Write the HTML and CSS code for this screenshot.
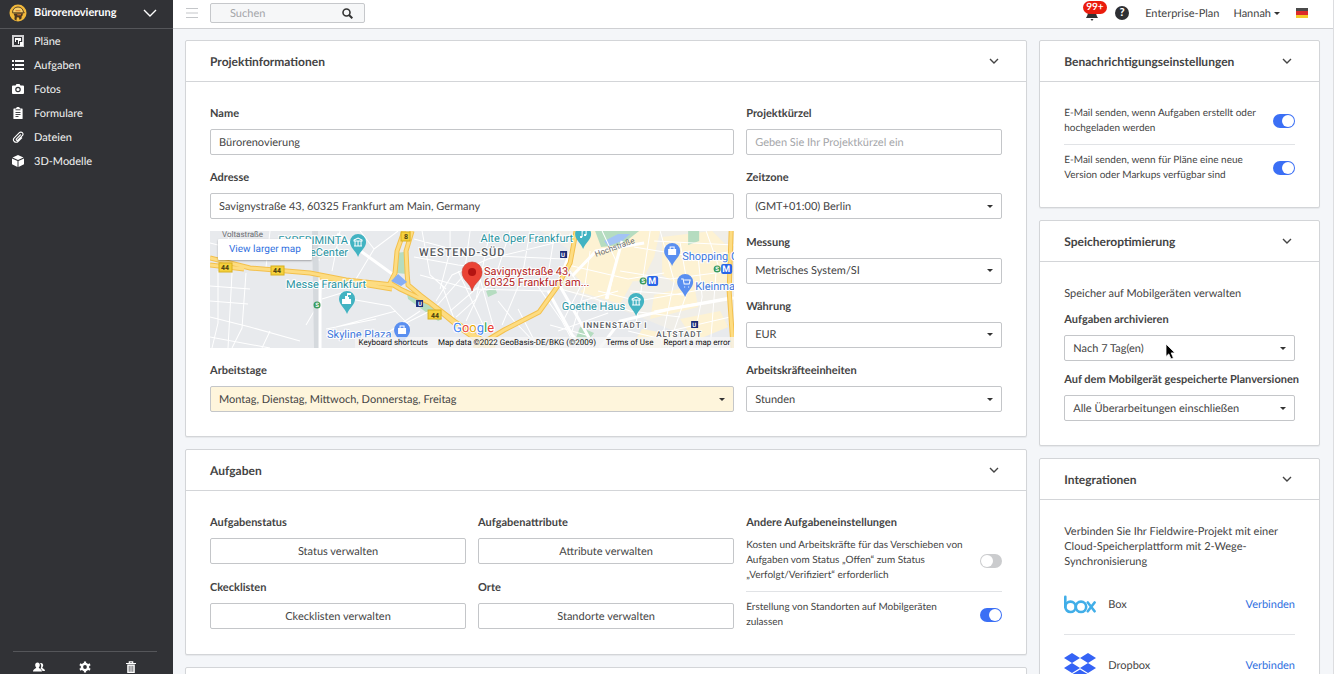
FILE: index.html
```html
<!DOCTYPE html>
<html lang="de">
<head>
    <meta charset="UTF-8">
    <meta name="viewport" content="width=device-width, initial-scale=1.0">
    <title>Bürorenovierung - Projekteinstellungen</title>
    <link rel="stylesheet" href="styles.css">
</head>
<body>
    <div class="app">
        <aside class="sidebar">
            <button class="project-switch" type="button">
                <svg class="project-logo" viewBox="0 0 18 18">
                    <circle cx="9" cy="9" r="8.500" fill="#f2b93b"/>
                    <path d="M3.500 8.500C3.500 5 6 3 9 3s5 2 5.500 5l.8.800H3.500z" fill="#f7cf6a" stroke="#4a3520" stroke-width=".9"/>
                    <path d="M4.500 9.500l9.500-.3-.5 2.300-1 1.200.2 1.500-2 1.800-.8-2.500-2-.3-.5 3.500-2-1.500.3-3z" fill="#4a3520"/>
                    <path d="M8 10.200l4-.2v1.300l-3.500.2zM6.500 6.200h5v1h-5z" fill="#d0722a"/>
                </svg>
                <span class="project-name">Bürorenovierung</span>
                <svg class="chevron-wide" viewBox="0 0 14 8"><path d="M1 1l6 6 6-6" fill="none" stroke="#fff" stroke-width="1.400"/></svg>
            </button>
            <nav class="menu">
                <a href="#plans">
                    <svg viewBox="0 0 12 12"><path d="M0 0h12v12H0z" fill="#cfcfd1"/><path d="M2 2h8v8H2z" fill="#313236"/><path d="M3 3h6v3H7v3H6V5H4v2H3z" fill="#fff"/><path d="M8 7h3v4H8z" fill="#fff"/></svg>
                    Pläne
                </a>
                <a href="#tasks">
                    <svg viewBox="0 0 12 12"><path d="M0 1h2v2H0zM3 1h9v2H3zM0 5h2v2H0zM3 5h9v2H3zM0 9h2v2H0zM3 9h9v2H3z" fill="#fff"/></svg>
                    Aufgaben
                </a>
                <a href="#photos">
                    <svg viewBox="0 0 12 12"><path d="M1 2.500h2.500L4.500 1h3l1 1.500H11a1 1 0 0 1 1 1V10a1 1 0 0 1-1 1H1a1 1 0 0 1-1-1V3.500a1 1 0 0 1 1-1z" fill="#fff"/><circle cx="6" cy="6.500" r="2.200" fill="none" stroke="#313236" stroke-width="1.200"/></svg>
                    Fotos
                </a>
                <a href="#forms">
                    <svg viewBox="0 0 12 12"><path d="M2 1.500h2C4 .5 5 0 6 0s2 .5 2 1.500h2a.6.6 0 0 1 .6.6v9.300a.6.6 0 0 1-.6.6H2a.6.6 0 0 1-.6-.6V2.100a.6.600 0 0 1 .6-.6z" fill="#fff"/><path d="M3.500 2.800h5M3.500 5.500h5M3.500 7.500h5M3.500 9.500h3" stroke="#313236" stroke-width=".9"/></svg>
                    Formulare
                </a>
                <a href="#files">
                    <svg viewBox="0 0 12 12"><path d="M8.800 3.500L4.500 7.800a.9.9 0 0 0 1.300 1.300l4.500-4.500a2 2 0 0 0-2.900-2.900L2.300 6.800a2.600 2.600 0 0 0 3.700 3.700l4-4" fill="none" stroke="#fff" stroke-width="1.100"/></svg>
                    Dateien
                </a>
                <a href="#models">
                    <svg viewBox="0 0 12 12"><path d="M6 0l5.500 2.400L6 5 .5 2.400zM0 3.400l5.500 2.500V12L0 9.300zM12 3.400L6.500 5.900V12L12 9.300z" fill="#fff"/></svg>
                    3D-Modelle
                </a>
            </nav>
            <div class="sidebar-tools">
                <button type="button" aria-label="Personen">
                    <svg viewBox="0 0 12 12"><path d="M8 2c1.500 0 2.200 1 2.200 2.300 0 1-.5 1.700-.9 2.200 0 1 2.700 1.200 2.700 3.500H9.500C9 8.500 8 8 7.500 7.500 8.500 6 8.600 3.500 7 2.200z" fill="#fff"/><path d="M4.500 1.500C6 1.500 6.800 2.500 6.800 4c0 1-.5 2-1 2.400C5.800 7.600 9 7.700 9 10.500H0C0 7.700 3.200 7.600 3.200 6.400 2.700 6 2.200 5 2.200 4c0-1.500.8-2.500 2.300-2.500z" fill="#fff"/></svg>
                </button>
                <button type="button" aria-label="Einstellungen">
                    <svg viewBox="0 0 12 12"><circle cx="6" cy="6" r="3.100" fill="none" stroke="#fff" stroke-width="2.400"/><path d="M6 .5v11M.9 3.200l10.200 5.600M.9 8.800l10.200-5.600" stroke="#fff" stroke-width="2.200"/><circle cx="6" cy="6" r="1.900" fill="#313236"/></svg>
                </button>
                <button type="button" aria-label="Papierkorb">
                    <svg viewBox="0 0 12 12"><path d="M1 2.500h10M4.300 2V.8h3.400V2" fill="none" stroke="#fff" stroke-width="1.200"/><path d="M2.200 3.500h7.600V12H2.200z" fill="#fff"/><path d="M4.200 4.800v6M6 4.800v6M7.800 4.800v6" stroke="#313236" stroke-width=".7"/></svg>
                </button>
            </div>
        </aside>

        <div class="page">
            <header class="topbar">
                <button class="hamburger" type="button" aria-label="Menü">
                    <svg viewBox="0 0 12 10"><path d="M0 .5h12M0 5h12M0 9.500h12" stroke="#c4c6c9"/></svg>
                </button>
                <form class="search">
                    <input type="search" placeholder="Suchen" aria-label="Suchen">
                    <button type="button" aria-label="Suche starten">
                        <svg viewBox="0 0 11 11"><circle cx="4.500" cy="4.500" r="3.500" fill="none" stroke="#333" stroke-width="1.600"/><path d="M7 7l3.300 3.300" stroke="#333" stroke-width="2"/></svg>
                    </button>
                </form>
                <button class="bell" type="button" aria-label="Benachrichtigungen">
                    <svg viewBox="0 0 14 16"><path d="M7 1c3 0 4 2 4 5 0 4 1 5 2 7H1c1-2 2-3 2-7 0-3 1-5 4-5zM5.500 14h3l-1.500 2z" fill="#333"/></svg>
                    <span class="badge">99+</span>
                </button>
                <button class="help" type="button" aria-label="Hilfe">?</button>
                <a class="plan" href="#plan">Enterprise-Plan</a>
                <button class="user" type="button">Hannah<span class="caret"></span></button>
                <button class="flag" type="button" aria-label="Deutsch">
                    <svg viewBox="0 0 12 10"><path d="M0 0h12v3H0z" fill="#4a4a4a"/><path d="M0 3h12v4H0z" fill="#dc2a2a"/><path d="M0 7h12v3H0z" fill="#f5c928"/></svg>
                </button>
            </header>

            <main class="content">
                <div class="column">
                    <section class="card">
                        <h2>Projektinformationen <svg class="chevron" viewBox="0 0 10 6"><path d="M1 1l4 4 4-4" fill="none" stroke="#444" stroke-width="1.400"/></svg></h2>
                        <div class="card-body thirds">
                            <div class="wide project-left">
                                <div class="field">
                                    <label for="name">Name</label>
                                    <input id="name" type="text" value="Bürorenovierung">
                                </div>
                                <div>
                                    <div class="field">
                                        <label for="address">Adresse</label>
                                        <input id="address" type="text" value="Savignystraße 43, 60325 Frankfurt am Main, Germany">
                                    </div>
                                    <div class="map">
                                        <svg viewBox="0 0 524 117" preserveAspectRatio="xMidYMid slice">
                                            <defs>
                                                <path id="pin" d="M0 15C-2 9-8 6-8 0a8 8 0 0 1 16 0c0 6-6 9-8 15z"/>
                                            </defs>
                                            <rect width="524" height="117" fill="#e8eaed"/>
                                            <path d="M330 0h194v92l-60 8-44-18-70-24 8-40z" fill="#f0eee8"/>
                                            <path d="M375 0h75l-6 26-12 24-60 2-16-18zM386 42l38 6-14 25-40-12zM452 6l50-6 20 20-8 38-40 0-22-14zM444 64l40-10 4 22-48 12zM470 88l40-8 8 16-34 14zM432 98l34 6-12 13h-34z" fill="#fdf2d3"/>
                                            <path d="M385 0h44l-18 14-20 2zM478 0h11v10l-11 4zM370 96l14 6-8 10h-12zM276 60l9-3 2 5-9 4zM186 22l8-1 3 22-11-1zM196 58l26 18 10 12-4 2-30-22z" fill="#b5dcc0"/>
                                            <path d="M394 10l14-7 12 0-8 7-14 5z" fill="#a3c3f5"/>
                                            <g class="lanes">
                                                <path d="M0 55l40 3M0 70l38 3M0 86l40 10 50 14M8 40v52l-6 25M22 42l-4 75M36 42l-4 55-10 20M0 106l60 11M60 100l-8 17M0 12l20 5 90 12M20 0l-6 28M60 0l-4 36M126 96l60-16M96 94l14-24 2-28M112 68l26-8M140 68l40 7 20 20M116 98l50-10M130 0l-8 40M150 0l14 18-18 30M164 18l24-18"/>
                                                <path d="M204 8l60 16 90 4M212 0l8 44 16 14M240 0v20l-10 38M260 0l-6 44-30 34M280 0l-14 68-20 18M300 0l-16 50M320 0l-8 46-20 48M345 0l-9 56M204 26l44 8 90 10M210 44l50 14 82 2M226 70l16-26 36-16 66-16M240 80l28-24M256 90l14-30 32-18M232 54l12 34M248 40l26 56M266 34l18 64M288 70l16 20 26 27M308 78l20 39M324 50l28 40 14 27M342 44l16-10 60 14 36-6M180 100l30-20M190 96l10 21M160 110l60-30"/>
                                                <path d="M350 58l30 8 40 14 50 6M360 40l10 16-16 32M380 20l-6 40-12 40M392 0l14 30-8 38M424 16l24 4 40 6 36-6M440 0l-14 92M450 0l14 50-14 67M470 12l8 46-20 59M488 26l4 40-10 51M506 40l-6 77M372 70l36-10M388 60l40 10 90-16M410 40l50 8 60-8M420 60l54 4M444 80l76-14M460 100l60-14M348 100l50-18M376 104l-36-10M418 100l34 8M444 10l80 4M496 0l12 34"/>
                                            </g>
                                            <path d="M105 0l2 117" stroke="#d5d9dd" stroke-width="6"/>
                                            <path d="M127 3l58 42M110 46v71M360 22l-12 30 16 28 20 36M412 10l-16 58M434 12l-48 8-24 25M390 117l20-27 50-12 64-11M338 60l24 44 12 13" fill="none" stroke="#fff" stroke-width="3"/>
                                            <g class="road-edge"><path d="M0 27l40 10 60 5 36 7 47 5M0 34l34 4M110 46l72 12M202 0l-6 20 1 22 1 12 12 10 34 26 40 27M194 0l-7 20-2 22-5 10 10 6 30 14 30 25 34 24M264 117l30-18 35-18 18-25 13-24 6-32M521 0l-2 60 4 57"/></g>
                                            <g class="road"><path d="M0 27l40 10 60 5 36 7 47 5M0 34l34 4M110 46l72 12M202 0l-6 20 1 22 1 12 12 10 34 26 40 27M194 0l-7 20-2 22-5 10 10 6 30 14 30 25 34 24M264 117l30-18 35-18 18-25 13-24 6-32M521 0l-2 60 4 57"/></g>
                                            <path d="M181 50l7-7 9 8-6 4z" fill="#86aef5"/>
                                            <g class="shield">
                                                <rect x="9" y="32" width="13" height="9"/><text x="15" y="39">44</text>
                                                <rect x="61" y="35" width="13" height="9"/><text x="67" y="42">44</text>
                                                <rect x="218" y="79" width="13" height="9"/><text x="225" y="87">44</text>
                                                <rect x="191" y="1" width="9" height="9"/><text x="196" y="8">8</text>
                                            </g>
                                            <g class="poi" text-anchor="end">
                                                <text x="138" y="13">EXPERIMINTA</text>
                                                <text x="138" y="25">eCenter</text>
                                                <text x="156" y="57">Messe Frankfurt</text>
                                                <text x="363" y="11">Alte Oper Frankfurt</text>
                                                <text x="415" y="79">Goethe Haus</text>
                                            </g>
                                            <g class="poi shop">
                                                <text x="117" y="107">Skyline Plaza</text>
                                                <text x="472" y="29">Shopping C</text>
                                                <text x="485" y="59">Kleinma</text>
                                            </g>
                                            <g class="area">
                                                <text x="209" y="25">WESTEND-SÜD</text>
                                                <text class="small" x="373" y="97">INNENSTADT I</text>
                                                <text class="small" x="446" y="106">ALTSTADT</text>
                                            </g>
                                            <text class="street" x="12" y="6">Voltastraße</text>
                                            <text class="street" x="386" y="26" transform="rotate(-20 386 26)">Hochstraße</text>
                                            <g fill="#42b3c2">
                                                <use href="#pin" x="148" y="11"/><use href="#pin" x="137" y="68"/><use href="#pin" x="373" y="3"/><use href="#pin" x="426" y="70"/>
                                            </g>
                                            <g fill="#5a8ff0">
                                                <use href="#pin" x="192" y="99"/><use href="#pin" x="462" y="20"/><use href="#pin" x="475" y="51"/>
                                            </g>
                                            <g fill="none" stroke="#fff">
                                                <path d="M144 9l4-2 4 2v1h-8zM145 10v5M148 10v5M151 10v5M144 15h8M422 68l4-2 4 2v1h-8zM423 69v5M426 69v5M429 69v5M422 74h8M372 6V0l4-1v5"/>
                                                <path d="M471 48h2l1 5h5l1-4h-6M474 56h1M478 56h1"/>
                                                <path d="M460 18v-2h4v2M190 97v-2h4v2"/>
                                            </g>
                                            <path d="M370 5h2v2h-2zM374 3h2v2h-2zM132 68h3v-3h2v-3h4v2h-3v2h1v2h2v5h-9zM458 18h8v6h-8zM188 97h8v6h-8z" fill="#fff"/>
                                            <g class="station">
                                                <rect x="206" y="69" width="7" height="7" fill="#1b2a78"/><text x="210" y="75">U</text>
                                                <rect x="350" y="20" width="7" height="7" fill="#1b2a78"/><text x="353" y="26">U</text>
                                                <rect x="481" y="90" width="7" height="7" fill="#1b2a78"/><text x="484" y="96">U</text>
                                                <circle cx="107" cy="74" r="3.500" fill="#3b9a5c"/><text x="107" y="76">S</text>
                                                <circle cx="433" cy="50" r="3.500" fill="#3b9a5c"/><text x="433" y="52">S</text>
                                                <circle cx="507" cy="38" r="3.500" fill="#3b9a5c"/><text x="507" y="40">S</text>
                                                <rect x="437" y="45" width="11" height="10" rx="2" fill="#2864e8"/><text class="metro" x="442" y="53">M</text>
                                                <rect x="511" y="33" width="11" height="10" rx="2" fill="#2864e8"/><text class="metro" x="516" y="41">M</text>
                                            </g>
                                            <path d="M262 60c-2-9-10-10-10-19a10 10 0 0 1 20 0c0 9-8 10-10 19z" fill="#ea4335" stroke="#c5372c" stroke-width=".6"/>
                                            <circle cx="262" cy="41" r="4" fill="#b31412"/>
                                            <g class="place">
                                                <text x="274" y="44">Savignystraße 43,</text>
                                                <text x="274" y="55">60325 Frankfurt am...</text>
                                            </g>
                                            <text class="google" x="243" y="101"><tspan fill="#4285f4">G</tspan><tspan fill="#ea4335">o</tspan><tspan fill="#e8a900">o</tspan><tspan fill="#4285f4">g</tspan><tspan fill="#34a853">l</tspan><tspan fill="#ea4335">e</tspan></text>
                                        </svg>
                                        <a class="map-link" href="#map">View larger map</a>
                                        <div class="map-credits">
                                            <span>Keyboard shortcuts</span>
                                            <span>Map data ©2022 GeoBasis-DE/BKG (©2009)</span>
                                            <span>Terms of Use</span>
                                            <span>Report a map error</span>
                                        </div>
                                    </div>
                                </div>
                                <div class="field">
                                    <label for="days">Arbeitstage</label>
                                    <select id="days" class="highlight"><option>Montag, Dienstag, Mittwoch, Donnerstag, Freitag</option></select>
                                </div>
                            </div>
                            <div class="project-right">
                                <div class="field">
                                    <label for="code">Projektkürzel</label>
                                    <input id="code" type="text" placeholder="Geben Sie Ihr Projektkürzel ein">
                                </div>
                                <div class="field">
                                    <label for="timezone">Zeitzone</label>
                                    <select id="timezone"><option>(GMT+01:00) Berlin</option></select>
                                </div>
                                <div class="field">
                                    <label for="units">Messung</label>
                                    <select id="units"><option>Metrisches System/SI</option></select>
                                </div>
                                <div class="field">
                                    <label for="currency">Währung</label>
                                    <select id="currency"><option>EUR</option></select>
                                </div>
                                <div class="field">
                                    <label for="labor">Arbeitskräfteeinheiten</label>
                                    <select id="labor"><option>Stunden</option></select>
                                </div>
                            </div>
                        </div>
                    </section>

                    <section class="card">
                        <h2>Aufgaben <svg class="chevron" viewBox="0 0 10 6"><path d="M1 1l4 4 4-4" fill="none" stroke="#444" stroke-width="1.400"/></svg></h2>
                        <div class="card-body thirds">
                            <div class="wide task-grid">
                                <div class="field"><h3>Aufgabenstatus</h3><button type="button">Status verwalten</button></div>
                                <div class="field"><h3>Aufgabenattribute</h3><button type="button">Attribute verwalten</button></div>
                                <div class="field"><h3>Ckecklisten</h3><button type="button">Ckecklisten verwalten</button></div>
                                <div class="field"><h3>Orte</h3><button type="button">Standorte verwalten</button></div>
                            </div>
                            <div class="field">
                                <h3>Andere Aufgabeneinstellungen</h3>
                                <div class="toggles">
                                    <label class="toggle-row">Kosten und Arbeitskräfte für das Verschieben von Aufgaben vom Status „Offen“ zum Status „Verfolgt/Verifiziert“ erforderlich <input type="checkbox" class="toggle"></label>
                                    <label class="toggle-row">Erstellung von Standorten auf Mobilgeräten zulassen <input type="checkbox" class="toggle" checked></label>
                                </div>
                            </div>
                        </div>
                    </section>

                    <section class="card empty"></section>
                </div>

                <div class="column">
                    <section class="card">
                        <h2>Benachrichtigungseinstellungen <svg class="chevron" viewBox="0 0 10 6"><path d="M1 1l4 4 4-4" fill="none" stroke="#444" stroke-width="1.400"/></svg></h2>
                        <div class="card-body toggles">
                            <label class="toggle-row">E-Mail senden, wenn Aufgaben erstellt oder hochgeladen werden <input type="checkbox" class="toggle" checked></label>
                            <label class="toggle-row">E-Mail senden, wenn für Pläne eine neue Version oder Markups verfügbar sind <input type="checkbox" class="toggle" checked></label>
                        </div>
                    </section>

                    <section class="card">
                        <h2>Speicheroptimierung <svg class="chevron" viewBox="0 0 10 6"><path d="M1 1l4 4 4-4" fill="none" stroke="#444" stroke-width="1.400"/></svg></h2>
                        <div class="card-body storage">
                            <p>Speicher auf Mobilgeräten verwalten</p>
                            <div class="field">
                                <label for="archive">Aufgaben archivieren</label>
                                <div class="select-wrap">
                                    <select id="archive"><option>Nach 7 Tag(en)</option></select>
                                    <svg class="pointer" viewBox="0 0 11 17"><path d="M1 1v12.500l2.800-2.600 2.200 5 2.400-1-2.200-5H10z" fill="#000" stroke="#fff" stroke-width=".8"/></svg>
                                </div>
                            </div>
                            <div class="field">
                                <label for="versions">Auf dem Mobilgerät gespeicherte Planversionen</label>
                                <select id="versions"><option>Alle Überarbeitungen einschließen</option></select>
                            </div>
                        </div>
                    </section>

                    <section class="card">
                        <h2>Integrationen <svg class="chevron" viewBox="0 0 10 6"><path d="M1 1l4 4 4-4" fill="none" stroke="#444" stroke-width="1.400"/></svg></h2>
                        <div class="card-body">
                            <p>Verbinden Sie Ihr Fieldwire-Projekt mit einer Cloud-Speicherplattform mit 2-Wege-Synchronisierung</p>
                            <ul class="integrations">
                                <li>
                                    <svg viewBox="0 0 32 24"><g fill="none" stroke="#41aee8" stroke-width="2.600" stroke-linecap="round"><path d="M1.300 4.800V15"/><circle cx="6.500" cy="14.800" r="5.200"/><circle cx="17" cy="14.800" r="5.200"/><path d="M23.800 10.500l6.800 8.800M30.600 10.500l-6.800 8.800"/></g></svg>
                                    <span>Box</span>
                                    <a href="#box">Verbinden</a>
                                </li>
                                <li>
                                    <svg viewBox="0 0 32 24"><path d="M8 0l8 5-8 5-8-5zM24 0l8 5-8 5-8-5zM8 10l8 5-8 5-8-5zM24 10l8 5-8 5-8-5zM16 16.500l7.500 4.500-7.500 4.500L8.500 21z" fill="#3563f5"/></svg>
                                    <span>Dropbox</span>
                                    <a href="#dropbox">Verbinden</a>
                                </li>
                            </ul>
                        </div>
                    </section>
                </div>
            </main>
        </div>
    </div>
</body>
</html>
```
FILE: styles.css
```css
* {
    box-sizing: border-box;
}
body {
    margin: 0;
    font-family: Lato, sans-serif;
    font-size: 11px;
    line-height: 15px;
    text-rendering: geometricPrecision;
    color: #444;
    background-color: #f4f6f9;
}
button, input, select {
    font: inherit;
    color: inherit;
    text-rendering: inherit;
}
button {
    padding: 0;
    border: none;
    background: none;
    cursor: pointer;
}
h2, h3, p, ul {
    margin: 0;
    padding: 0;
}
a {
    color: #2f6fe0;
    text-decoration: none;
}
svg {
    display: block;
    flex: none;
}
.app {
    display: flex;
    height: 100vh;
    overflow: hidden;
}

/* sidebar */
.sidebar {
    width: 173px;
    flex: none;
    display: flex;
    flex-direction: column;
    background-color: #313236;
    color: #fff;
}
.project-switch {
    display: flex;
    align-items: center;
    gap: 7px;
    height: 29px;
    padding: 0 16px 3px 9px;
    border-bottom: 1px solid #55565a;
    font-weight: 700;
    text-align: left;
}
.project-logo {
    width: 18px;
    height: 18px;
}
.project-name {
    flex: 1;
}
.chevron-wide {
    width: 14px;
    height: 8px;
}
.menu a {
    display: flex;
    align-items: center;
    gap: 10px;
    height: 24px;
    padding-left: 12px;
    color: #f2f2f2;
}
.menu svg, .sidebar-tools svg {
    width: 12px;
    height: 12px;
}
.sidebar-tools {
    display: flex;
    justify-content: space-between;
    margin: auto 16px 0 13px;
    padding: 9px 20px 1px;
    border-top: 1px solid #55565a;
}

/* top bar */
.page {
    flex: 1;
    min-width: 0;
    border-right: 1px solid #dcdde0;
}
.topbar {
    display: flex;
    align-items: center;
    height: 29px;
    padding: 0 25px 2px 13px;
    border-bottom: 1px solid #cfd0d3;
    background-color: #fff;
}
.hamburger svg {
    width: 12px;
    height: 10px;
}
.search {
    display: flex;
    align-items: center;
    width: 155px;
    height: 20px;
    margin: 0 auto 0 12px;
    padding: 0 11px 0 19px;
    border: 1px solid #c6c8cb;
    border-radius: 2px;
    background-color: #f6f7f8;
}
.search input {
    flex: 1;
    min-width: 0;
    padding: 0;
    border: none;
    outline: none;
    background: none;
}
.search svg {
    width: 11px;
    height: 11px;
}
::placeholder {
    color: #a4a6a9;
    opacity: 1;
}
.bell {
    position: relative;
    margin-right: 16px;
}
.bell svg {
    width: 14px;
    height: 16px;
}
.badge {
    position: absolute;
    top: -4px;
    left: -2px;
    padding: 0 3px;
    border-radius: 7px;
    background-color: #ea1c0d;
    color: #fff;
    font-size: 10px;
    font-weight: 700;
    line-height: 13px;
}
.help {
    width: 14px;
    height: 14px;
    border-radius: 50%;
    background-color: #2e2f33;
    color: #fff;
    font-weight: 900;
    line-height: 14px;
}
.plan {
    margin: 0 14px 0 16px;
    color: #444;
}
.user {
    display: flex;
    align-items: center;
    gap: 3px;
}
.caret {
    border: 3px solid transparent;
    border-top-color: #333;
    border-bottom: none;
}
.flag {
    margin-left: 16px;
}
.flag svg {
    width: 12px;
    height: 10px;
}

/* cards */
.content {
    display: grid;
    grid-template-columns: 3fr 1fr;
    gap: 12px;
    padding: 11px 13px 12px 12px;
}
.column {
    display: flex;
    flex-direction: column;
    gap: 12px;
    min-width: 0;
}
.card {
    border: 1px solid #d3d5d8;
    border-radius: 2px;
    background-color: #fff;
    box-shadow: 0 1px 1px rgba(0, 0, 0, 0.06);
}
.card.empty {
    min-height: 43px;
}
.card h2 {
    display: flex;
    align-items: center;
    justify-content: space-between;
    height: 41px;
    padding: 0 27px 0 24px;
    border-bottom: 1px solid #d3d5d8;
    font-size: 12px;
    font-weight: 700;
}
.chevron {
    width: 10px;
    height: 6px;
}
.card-body {
    padding: 24px;
}
.thirds {
    display: grid;
    grid-template-columns: repeat(3, 1fr);
    gap: 12px;
}
.wide {
    grid-column: span 2;
}
.project-left {
    display: flex;
    flex-direction: column;
    gap: 15px;
}
.project-right {
    display: flex;
    flex-direction: column;
    justify-content: space-between;
}
.task-grid {
    display: grid;
    grid-template-columns: 1fr 1fr;
    align-content: start;
    gap: 16px 12px;
}

/* form fields */
.field {
    display: flex;
    flex-direction: column;
    gap: 8px;
}
.field > label, .field > h3 {
    font-size: 11px;
    font-weight: 700;
    white-space: nowrap;
}
.field > input, .field select, .field > button {
    width: 100%;
    height: 26px;
    padding: 0 8px;
    border: 1px solid #c4c6c9;
    border-radius: 2px;
    background-color: #fff;
}
.field select {
    appearance: none;
    background-image: url("data:image/svg+xml,%3Csvg xmlns='http://www.w3.org/2000/svg' width='6' height='3'%3E%3Cpath d='M0 0h6L3 3z' fill='%23333'/%3E%3C/svg%3E");
    background-repeat: no-repeat;
    background-position: right 8px center;
}
.field select.highlight {
    background-color: #fef5dc;
}
.select-wrap {
    position: relative;
}
.pointer {
    position: absolute;
    top: 8px;
    left: 101px;
    width: 11px;
    height: 17px;
}
.storage {
    display: flex;
    flex-direction: column;
    gap: 11px;
}

/* toggles */
.toggle-row {
    display: flex;
    align-items: center;
    justify-content: space-between;
    gap: 8px;
    font-size: 10px;
}
.toggle-row + .toggle-row {
    margin-top: 8px;
    padding-top: 8px;
    border-top: 1px solid #e1e3e6;
}
.toggle {
    appearance: none;
    flex: none;
    width: 22px;
    height: 14px;
    margin: 0;
    padding: 1px;
    border-radius: 7px;
    background-color: #cbccce;
    cursor: pointer;
}
.toggle::before {
    content: "";
    display: block;
    width: 12px;
    height: 12px;
    border-radius: 50%;
    background-color: #fff;
}
.toggle:checked {
    background-color: #3b6ff5;
}
.toggle:checked::before {
    margin-left: auto;
}

/* map */
.map {
    position: relative;
    margin-top: 12px;
    overflow: hidden;
    font-family: Roboto, sans-serif;
}
.map svg {
    width: 100%;
    height: 117px;
}
.map-link {
    position: absolute;
    top: 8px;
    left: 8px;
    padding: 3px 11px;
    border-radius: 1px;
    background-color: #fff;
    box-shadow: 0 1px 2px rgba(0, 0, 0, 0.3);
    font-size: 10px;
}
.map-credits {
    position: absolute;
    right: 0;
    bottom: 0;
    display: flex;
    gap: 10px;
    padding: 0 4px;
    background-color: rgba(245, 245, 245, 0.8);
    color: #111;
    font-size: 8px;
    line-height: 11px;
}
.lanes {
    fill: none;
    stroke: #fff;
    stroke-width: 1;
}
.road-edge {
    fill: none;
    stroke: #f3c04d;
    stroke-width: 5;
}
.road {
    fill: none;
    stroke: #fddc82;
    stroke-width: 3;
}
.shield rect {
    fill: #f5d13d;
    stroke: #d8b01f;
}
.shield text {
    fill: #4a4010;
    font-size: 7px;
    font-weight: 700;
    text-anchor: middle;
}
.poi text, .place text {
    fill: #2a94a2;
    font-size: 11px;
    stroke: #fff;
    stroke-width: 2px;
    paint-order: stroke;
}
.shop text {
    fill: #4078dc;
}
.place text {
    fill: #b3261e;
}
.area text {
    fill: #55585c;
    font-size: 11px;
    font-weight: 500;
    letter-spacing: 1px;
    stroke: #fff;
    stroke-width: 2px;
    paint-order: stroke;
}
.area .small {
    font-size: 8px;
}
.street {
    fill: #6a6d71;
    font-size: 8px;
}
.station text {
    fill: #fff;
    font-size: 6px;
    font-weight: 700;
    text-anchor: middle;
}
.station .metro {
    font-size: 9px;
}
.google {
    font-size: 13px;
    stroke: #fff;
    stroke-width: 2px;
    paint-order: stroke;
}

/* integrations */
.integrations {
    margin-top: 5px;
    list-style: none;
}
.integrations li {
    display: flex;
    align-items: center;
    gap: 12px;
    height: 61px;
    border-bottom: 1px solid #e1e3e6;
}
.integrations svg {
    width: 32px;
    height: 24px;
}
.integrations a {
    margin-left: auto;
}
```
